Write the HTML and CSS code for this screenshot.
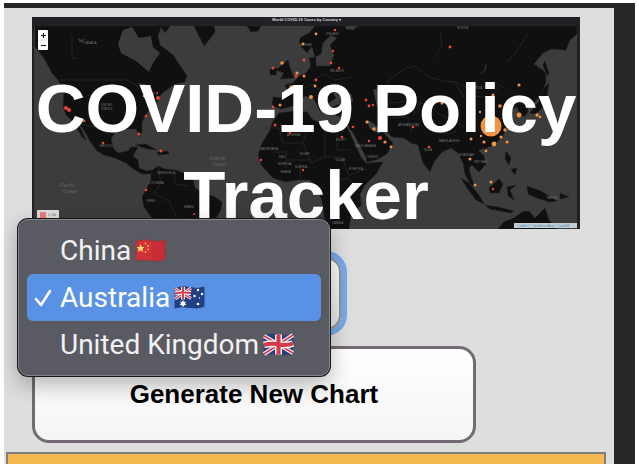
FILE: index.html
```html
<!DOCTYPE html>
<html lang="en">
<head>
<meta charset="utf-8">
<title>COVID-19 Policy Tracker</title>
<link rel="stylesheet" href="styles.css">
</head>
<body>
<div class="page">
<main class="panel">
  <div class="content">
    <header class="hero">
      <svg class="map" viewBox="32 17 548 212" preserveAspectRatio="xMidYMid slice" aria-hidden="true">
        <rect x="32" y="17" width="548" height="212" fill="#3c3c3c"/>
        <g fill="#101010" stroke="#202020" stroke-width=".5">
          <!-- Americas -->
          <path d="M35 26H170L165 33 161 27 158 36 160 45 168 51 174 56 177 61 183 70 187 76 185 82 175 84 168 89 161 94 158 101 151 107 145 116 142 122 142 131 140 137 136 129 125 129 115 132 111 139 113 148 118 153 128 151 131 147 138 147 133 156 138 160 139 168 147 171 151 170 152 174 142 174 132 168 126 163 115 158 104 155 97 151 90 141 82 127 79 125 86 140 82 137 74 123 66 115 63 106 64 92 58 80 52 73 45 60 38 50 35 47Z"/>
          <path d="M194 26H214L215 32 209 40 204 46 200 38ZM247 26H261L258 31 251 32Z"/>
          <path d="M135 145L146 144 157 150 148 149ZM157 152L168 151 169 154 158 155Z"/>
          <path d="M151 171L158 166 165 169 176 170 186 174 193 179 195 188 202 192 215 197 222 202 221 210 216 218 215 229H156L152 218 144 207 142 197 147 188 151 179Z"/>
          <!-- Europe and Asia -->
          <path d="M307 53L299 44 300 38 309 33 315 26H577V34L570 40 566 50 551 49 543 53 534 64 545 72 546 82 540 96 532 105 527 106 528 112 524 117 519 112 517 107 511 109 506 113 512 122 506 130 502 137 494 145 486 148 478 150 484 156 486 164 479 172 472 165 469 168 471 177 475 187 470 184 465 174 463 163 458 153 451 148 442 152 434 162 430 172 423 163 418 145 411 143 404 138 392 137 386 131 379 128 393 143 387 154 376 160 366 162 359 146 351 132 348 125 350 116 337 116 331 107 341 104 337 97 329 103 326 98 318 95 324 109 320 111 314 99 306 96 298 99 293 106 281 109 272 106 273 97 285 98 288 91 285 85 293 83 299 76 306 73 311 66 309 58 316 57 316 66 330 66 334 55 330 45 337 38 331 35 323 43 321 54 315 57 312 46Z"/>
          <path d="M276 70L282 65 288 60 290 68 294 78 280 79 284 73ZM270 69L277 68 276 75 270 75Z"/>
          <!-- Africa -->
          <path d="M279 113L296 111 307 112 313 120 329 125 347 127 352 136 360 150 366 163 383 162 376 174 365 185 360 194 361 205 351 214 349 229H329L324 216 322 201 318 190 310 180 298 180 285 182 273 178 262 166 258 156 261 145 270 130 273 121Z"/>
          <!-- Southeast Asia and Australia -->
          <path d="M461 178L469 183 479 195 484 204 476 200 467 188ZM485 205L498 207 514 211 511 213 490 209ZM489 188L499 179 503 184 499 193 490 193ZM507 187L516 185 510 190 514 200 508 196ZM506 151L511 158 509 165 505 159ZM511 169L517 168 515 175ZM527 186L541 191 557 201 550 202 537 198 528 194ZM560 193L569 197 560 199Z"/>
          <path d="M498 229L504 222 514 218 522 212 529 211 535 218 545 208 549 220 557 229Z"/>
          <path d="M549 73L545 61 543 65 547 76ZM549 83L541 91 539 101 530 113 536 114 546 104Z"/>
        </g>
        <g fill="#3c3c3c">
          <path d="M123 30L132 27 139 38 151 36 153 47 160 53 153 63 149 72 143 67 136 61 121 53 118 44Z"/>
          <path d="M138 83L145 84 151 90 156 94 146 96 142 91ZM333 94L342 88 352 95 353 102 340 102ZM373 90L381 87 384 98 388 106 386 113 377 106ZM345 26L358 26 353 30 346 29Z"/>
          <path d="M348 129L352 131 366 157 367 164 361 157ZM366 119L373 123 382 132 379 134 370 129Z"/>
          <path d="M480 74Q485 73 486 62Q488 69 482 74Z"/>
          <path d="M77 38L82 40 86 38 83 41 85 43 80 42Z"/>
        </g>
        <!-- Borders -->
        <g fill="none" stroke="#292929" stroke-width=".8">
          <path d="M59 80H126L138 86 150 94M82 124L98 128 110 135M72 35V58H78M158 166L161 184 153 193 169 201 177 219M176 170L174 184 188 186M265 128H279L283 143H303L309 125M273 152H286V168M303 143L311 163 325 157V130M325 157H342L349 175 367 169M330 179H349L359 190M330 197H351M300 163V177M286 160H311M337 129V150H351"/>
          <path d="M312 81L324 74 335 80 352 77M299 91L312 84 322 91M386 84L393 77 406 68 415 66 429 77 442 81 455 82 467 87 484 86 498 84 506 89M389 103L401 102 411 99 421 103 431 108 443 116 453 120 464 127M393 118L408 117 411 132M421 103L414 114M455 82L463 96 491 97 498 87M440 32L442 46 434 58M528 33L516 53 507 62M431 129L448 134 456 131"/>
        </g>
        <g class="map-labels">
          <text x="84" y="44">CANADA</text><text x="101" y="106">UNITED</text><text x="101" y="110">STATES</text><text x="100" y="147">MEXICO</text><text x="157" y="174">VENEZUELA</text><text x="147" y="202">PERU</text><text x="184" y="208">BRAZIL</text><text x="148" y="184">COLOMBIA</text>
          <text x="457" y="29">RUSSIA</text><text x="299" y="46">NORWAY</text><text x="326" y="35">FINLAND</text><text x="330" y="72">BELARUS</text><text x="260" y="150">MAURITANIA</text><text x="279" y="158">MALI</text><text x="300" y="155">NIGER</text><text x="287" y="136">ALGERIA</text><text x="336" y="141">EGYPT</text><text x="335" y="161">SUDAN</text><text x="349" y="170">ETHIOPIA</text><text x="278" y="165">BURKINA</text><text x="280" y="173">GHANA</text><text x="295" y="168">NIGERIA</text><text x="332" y="224">ZAMBIA</text><text x="367" y="158">YEMEN</text><text x="355" y="147">SAUDI ARABIA</text><text x="398" y="126">AFGHANISTAN</text><text x="424" y="151">INDIA</text><text x="439" y="142">BANGLADESH</text><text x="466" y="89">MONGOLIA</text><text x="459" y="156">MYANMAR</text><text x="474" y="163">VIETNAM</text><text x="547" y="199">PAPUA</text>
          <text class="ocean" x="60" y="187">Pacific</text><text class="ocean" x="62" y="193">Ocean</text><text class="ocean" x="209" y="160">Atlantic</text><text class="ocean" x="212" y="166">Ocean</text>
        </g>
        <!-- Reported cases -->
        <g fill="#f04438">
          <circle cx="66" cy="108" r="2"/><circle cx="69" cy="110" r="2"/><circle cx="66" cy="92" r="1"/><circle cx="84" cy="121" r="1.3"/><circle cx="103" cy="143" r="1.3"/><circle cx="139" cy="134" r="1.5"/><circle cx="146" cy="116" r="1.3"/><circle cx="158" cy="98" r="2"/><circle cx="157" cy="93" r="1"/><circle cx="161" cy="151" r="1.5"/><circle cx="146" cy="190" r="1.3"/><circle cx="194" cy="214" r="1"/><circle cx="273" cy="68" r="1.5"/><circle cx="304" cy="60" r="1.5"/><circle cx="273" cy="107" r="1.4"/><circle cx="275" cy="125" r="1.5"/><circle cx="261" cy="160" r="1.2"/><circle cx="290" cy="133" r="1.2"/><circle cx="303" cy="170" r="1.2"/><circle cx="335" cy="30" r="1.3"/><circle cx="333" cy="51" r="1.2"/><circle cx="331" cy="63" r="1.4"/><circle cx="339" cy="68" r="1.3"/><circle cx="316" cy="80" r="1.4"/><circle cx="296" cy="76" r="1.5"/><circle cx="450" cy="47" r="1.4"/><circle cx="366" cy="100" r="1.4"/><circle cx="369" cy="106" r="1.4"/><circle cx="373" cy="105" r="1.2"/><circle cx="413" cy="127" r="1.3"/><circle cx="342" cy="137" r="1.3"/><circle cx="369" cy="141" r="1.3"/><circle cx="380" cy="138" r="2"/><circle cx="353" cy="127" r="1.3"/><circle cx="429" cy="147" r="1.3"/><circle cx="493" cy="189" r="1.2"/>
        </g>
        <g fill="#f29342">
          <circle cx="491" cy="126" r="10.5"/><circle cx="519" cy="115" r="2.4"/><circle cx="537" cy="115" r="1.7"/><circle cx="540" cy="117" r="1.3"/><circle cx="519" cy="85" r="1.6"/><circle cx="493" cy="95" r="1.6"/><circle cx="500" cy="106" r="1.8"/><circle cx="480" cy="112" r="1.2"/><circle cx="505" cy="130" r="1.7"/><circle cx="501" cy="137" r="1.6"/><circle cx="507" cy="142" r="1.5"/><circle cx="494" cy="144" r="2.4"/><circle cx="484" cy="142" r="1.6"/><circle cx="471" cy="139" r="1.5"/><circle cx="481" cy="136" r="1.2"/><circle cx="486" cy="151" r="1.3"/><circle cx="470" cy="159" r="1.5"/><circle cx="475" cy="185" r="1.5"/><circle cx="491" cy="182" r="1.5"/><circle cx="442" cy="103" r="1.6"/><circle cx="367" cy="122" r="1.6"/><circle cx="374" cy="129" r="1.7"/><circle cx="385" cy="142" r="1.6"/><circle cx="391" cy="147" r="1.4"/><circle cx="282" cy="63" r="1.7"/><circle cx="303" cy="44" r="1.4"/><circle cx="316" cy="34" r="1.4"/><circle cx="297" cy="73" r="1.6"/><circle cx="304" cy="76" r="1.5"/><circle cx="291" cy="87" r="1.7"/><circle cx="280" cy="105" r="1.5"/><circle cx="311" cy="97" r="2"/><circle cx="315" cy="86" r="1.4"/><circle cx="144" cy="96" r="1.3"/>
        </g>
        <!-- Frame and map controls -->
        <path d="M32 17H580V229H577V26H34V229H32Z" fill="#202026"/>
        <text class="map-title" x="272" y="21">World COVID-19 Cases by Country ▾</text>
        <rect x="38" y="30" width="10" height="20" rx="1" fill="#fff"/>
        <path d="M38 40H48" stroke="#ccc" stroke-width=".6"/>
        <path d="M41 35.500H46M43.500 33V38M41 45.500H46" stroke="#111" stroke-width="1.200"/>
        <rect x="37" y="210" width="22" height="16" rx="1" fill="#dedede"/>
        <rect x="40" y="212" width="6" height="6" fill="#ee7b7c"/>
        <text class="legend" x="48" y="216">&lt; 10</text>
        <rect x="514" y="223" width="63" height="5" fill="#c3cdd3"/>
        <text class="credit" x="518" y="227">Leaflet | © OpenStreetMap © CartoDB</text>
      </svg>
      <h1 class="title">COVID-19 Policy<br>Tracker</h1>
    </header>

    <div class="picker">
      <select class="country" aria-label="Country">
        <option>China</option>
        <option selected>Australia</option>
        <option>United Kingdom</option>
      </select>
      <ul class="menu" role="listbox" aria-label="Country">
        <li class="option" role="option" aria-selected="false">
          <span class="tick"></span><span>China</span>
          <svg class="flag" viewBox="0 0 31 23" aria-hidden="true">
            <path d="M1 2.500Q8 -.5 16 1.500T30 1V20.500Q23 23 15 21.500T1 22Z" fill="#d1323a" stroke="#9c3037" stroke-width=".8"/>
            <path d="M17 2Q23 4 30 1V20Q25 22 17 21Z" fill="#b92834" opacity=".45"/>
            <path d="M5.500 5L6.700 8 9.500 8 7.300 9.900 8.200 13 5.500 11.200 2.900 13 3.700 9.900 1.800 8H4.500Z" fill="#ffe36a"/>
            <g fill="#f5b34f"><circle cx="10.500" cy="4.500" r=".9"/><circle cx="13" cy="7" r=".9"/><circle cx="13" cy="10.500" r=".9"/><circle cx="10.500" cy="13" r=".9"/></g>
          </svg>
        </li>
        <li class="option selected" role="option" aria-selected="true">
          <span class="tick"><svg viewBox="0 0 18 18" aria-hidden="true"><path d="M2 10L7 16 16 2" fill="none" stroke="#fff" stroke-width="2.600" stroke-linecap="round" stroke-linejoin="round"/></svg></span><span>Australia</span>
          <svg class="flag" viewBox="0 0 31 23" aria-hidden="true">
            <path d="M1 2.500Q8 -.5 16 1.500T30 1V20.500Q23 23 15 21.500T1 22Z" fill="#1f3f86" stroke="#233765" stroke-width=".8"/>
            <path d="M1 2.500L17 12.500M1 13L17 2" stroke="#f1e9f1" stroke-width="3"/>
            <path d="M1 2.500L17 12.500M1 13L17 2" stroke="#d63f50" stroke-width="1.200"/>
            <path d="M9 1V13.500M1 7.500Q9 6 17 7" stroke="#f1e9f1" stroke-width="4" fill="none"/>
            <path d="M9 1V13.500M1 7.500Q9 6 17 7" stroke="#d63f50" stroke-width="2" fill="none"/>
            <path d="M9 14L10 16 12 15.500 11 17.500 12.500 19 10.300 19.200 9 21 7.800 19.200 5.500 19 7 17.500 6 15.500 8 16Z" fill="#fff"/>
            <g fill="#fff"><circle cx="24" cy="4" r="1.200"/><circle cx="20.500" cy="10" r="1.200"/><circle cx="28" cy="8" r="1.200"/><circle cx="25.500" cy="12" r=".7"/><circle cx="24" cy="18" r="1.300"/></g>
          </svg>
        </li>
        <li class="option" role="option" aria-selected="false">
          <span class="tick"></span><span>United Kingdom</span>
          <svg class="flag" viewBox="0 0 31 23" aria-hidden="true">
            <path d="M1 2.500Q8 -.5 16 1.500T30 1V20.500Q23 23 15 21.500T1 22Z" fill="#243f80" stroke="#3c4468" stroke-width=".8"/>
            <path d="M1 3L30 20M1 21L30 2" stroke="#f4ebee" stroke-width="4.200"/>
            <path d="M1 3L15 11M16 12L30 20M1 21L15 12M16 11L30 2" stroke="#d33b4a" stroke-width="1.500"/>
            <path d="M15.500 1.500V21.500M1 12Q8 10 16 11.500T30 10.500" stroke="#f4ebee" stroke-width="7" fill="none"/>
            <path d="M15.500 1.500V21.500M1 12Q8 10 16 11.500T30 10.500" stroke="#d33b4a" stroke-width="4" fill="none"/>
          </svg>
        </li>
      </ul>
    </div>

    <button class="generate" type="button">Generate New Chart</button>
  </div>
  <section class="chart" aria-label="Chart"></section>
</main>
</div>
</body>
</html>
```
FILE: styles.css
```css
* {
  box-sizing: border-box;
}

body {
  margin: 0;
  padding: 3px 4px 5px;
  background: #fff;
  font-family: "Liberation Sans", Arial, sans-serif;
}

.page {
  display: flex;
  min-height: calc(100vh - 8px);
  padding: 5px 21px 0 0;
  background: #272727;
}

.panel {
  display: flex;
  flex: 1;
  flex-direction: column;
  min-width: 0;
  padding: 9px 8px 0 2px;
  background: #dedede;
}

.content {
  padding: 0 26px;
}

.hero {
  display: grid;
  height: 212px;
  overflow: hidden;
}

.map,
.title {
  grid-area: 1 / 1;
}

.map {
  width: 100%;
  height: 212px;
}

.map-labels {
  fill: #747474;
  font-size: 3px;
}

.ocean {
  fill: #626262;
  font-size: 5px;
  font-style: italic;
}

.map-title {
  fill: #d8d8d8;
  font-size: 4px;
  font-weight: bold;
}

.legend {
  fill: #555;
  font-size: 4px;
}

.credit {
  fill: #3f8fbf;
  font-size: 3px;
}

.title {
  z-index: 1;
  margin: 0;
  padding-top: 48px;
  color: #fff;
  font-size: 69px;
  line-height: 87px;
  text-align: center;
  white-space: nowrap;
}

.picker {
  position: relative;
  width: 309px;
  margin-top: 28px;
}

.country {
  display: block;
  width: 100%;
  height: 73px;
  padding: 0 24px;
  appearance: none;
  background: linear-gradient(#fff, #e4e4e4);
  border: 2px solid #929292;
  border-radius: 15px;
  outline: 6px solid #7aa9e8;
  outline-offset: 0;
  color: #000;
  font: bold 26px "Liberation Sans", Arial, sans-serif;
}

.menu {
  position: absolute;
  z-index: 2;
  top: -38px;
  left: -14px;
  width: 312px;
  margin: 0;
  padding: 7px 8px;
  list-style: none;
  background: #5a5b62;
  border: 1px solid #83848a;
  border-radius: 10px;
  box-shadow: 0 0 0 1px #18191c, 0 8px 22px rgba(0, 0, 0, 0.3);
  color: #f1f1f3;
  font-family: Roboto, sans-serif;
  font-size: 28px;
  line-height: 45px;
}

.option {
  display: flex;
  align-items: center;
  height: 47px;
  padding-left: 7px;
  border-radius: 6px;
  white-space: nowrap;
}

.selected {
  background: #5992e5;
  color: #fff;
}

.tick {
  display: flex;
  flex: none;
  width: 26px;
}

.tick svg {
  width: 18px;
  height: 18px;
}

.flag {
  flex: none;
  width: 31px;
  height: 23px;
  margin-left: 4px;
}

.generate {
  display: block;
  width: 81%;
  height: 97px;
  margin-top: 16px;
  background: linear-gradient(#fff, #f5f5f5);
  border: 3px solid #736b73;
  border-radius: 17px;
  color: #000;
  font: bold 26px "Liberation Sans", Arial, sans-serif;
}

.chart {
  flex: 1;
  min-height: 12px;
  margin-top: 9px;
  background: #f5b74f;
  border: 2px solid #808080;
  border-bottom: 0;
}
```
